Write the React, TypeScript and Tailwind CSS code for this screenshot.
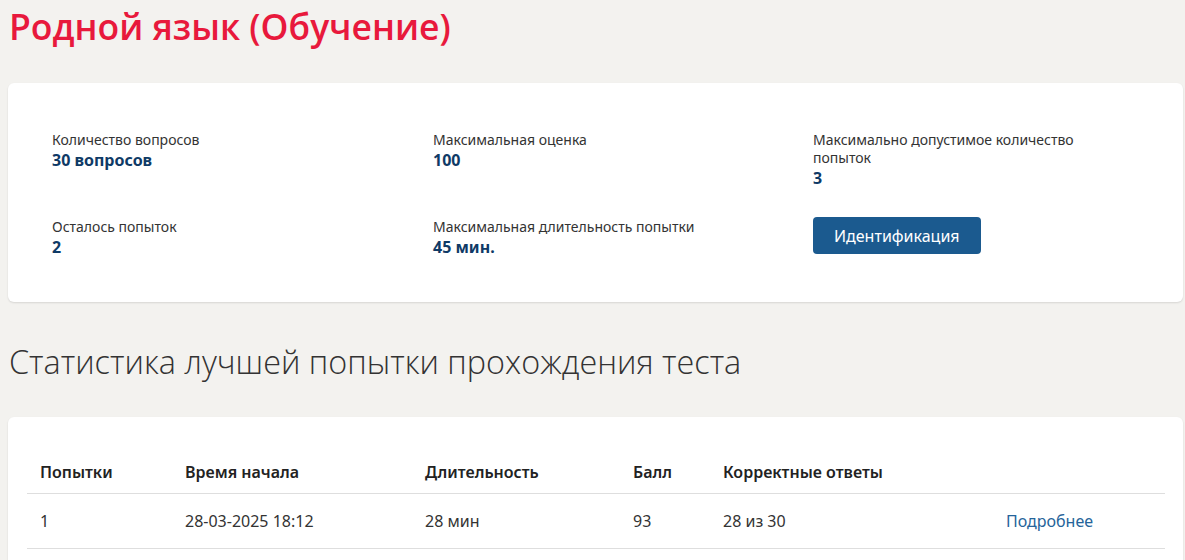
import React from "react";

const stats = [
  { label: "Количество вопросов", value: "30 вопросов" },
  { label: "Максимальная оценка", value: "100" },
  { label: "Максимально допустимое количество попыток", value: "3" },
  { label: "Осталось попыток", value: "2" },
  { label: "Максимальная длительность попытки", value: "45 мин." },
];

const attempts = [
  { n: "1", start: "28-03-2025 18:12", duration: "28 мин", score: "93", correct: "28 из 30" },
];

export default function App() {
  return (
    <div className="min-h-screen bg-[#f3f2ef] pl-2 pr-[2px] pt-[2px] pb-6 font-['Noto_Sans',sans-serif] text-[#333]">
      {/* --- TITLE --- */}
      <h1 className="pl-[1px] text-[35.5px] font-semibold leading-[48px] text-[#e8193c] font-['Open_Sans',sans-serif]">
        Родной язык (Обучение)
      </h1>

      {/* --- INFO CARD --- */}
      <div className="mt-[33px] rounded-md bg-white pl-[44px] pr-[44px] pt-[48px] pb-[44px] shadow-[0_1px_2px_rgba(0,0,0,0.12)]">
        <div className="grid grid-cols-[381px_380px_1fr] gap-y-[29px]">
          {stats.map((s) => (
            <div key={s.label}>
              <p className="max-w-[300px] text-[14px] leading-[18px] text-[#333]">{s.label}</p>
              <p className="text-[16px] font-bold leading-[22px] text-[#0f3a66]">{s.value}</p>
            </div>
          ))}
          <div>
            <button className="-mt-[1px] h-[37px] rounded-[4px] bg-[#1b5a8f] px-[21px] text-[16px] text-white">
              Идентификация
            </button>
          </div>
        </div>
      </div>

      {/* --- BEST ATTEMPT --- */}
      <h2 className="mt-[38px] pl-[1px] text-[32.4px] font-light leading-[42px] text-[#333] font-['Open_Sans',sans-serif]">
        Статистика лучшей попытки прохождения теста
      </h2>

      <div className="mt-[35px] rounded-md bg-white pl-[19px] pr-[18px] pt-[34px] pb-[20px] shadow-[0_1px_2px_rgba(0,0,0,0.12)]">
        <table className="w-full table-fixed border-collapse text-left">
          <colgroup>
            <col className="w-[145px]" />
            <col className="w-[240px]" />
            <col className="w-[208px]" />
            <col className="w-[90px]" />
            <col className="w-[283px]" />
            <col />
          </colgroup>
          <thead>
            <tr className="border-b border-[#dedede]">
              {["Попытки", "Время начала", "Длительность", "Балл", "Корректные ответы", ""].map((h, i) => (
                <th key={i} className="px-[13px] pt-[9px] pb-[9px] text-[16px] font-semibold leading-[24px] text-[#222]">
                  {h}
                </th>
              ))}
            </tr>
          </thead>
          <tbody>
            {attempts.map((a) => (
              <tr key={a.n} className="border-b border-[#dedede]">
                <td className="px-[13px] py-[15px] text-[16px] leading-[24px]">{a.n}</td>
                <td className="px-[13px] py-[15px] text-[16px] leading-[24px]">{a.start}</td>
                <td className="px-[13px] py-[15px] text-[16px] leading-[24px]">{a.duration}</td>
                <td className="px-[13px] py-[15px] text-[16px] leading-[24px]">{a.score}</td>
                <td className="px-[13px] py-[15px] text-[16px] leading-[24px]">{a.correct}</td>
                <td className="px-[13px] py-[15px] text-[16px] leading-[24px]">
                  <a href="#" className="text-[#25649a]">Подробнее</a>
                </td>
              </tr>
            ))}
          </tbody>
        </table>
      </div>
    </div>
  );
}
